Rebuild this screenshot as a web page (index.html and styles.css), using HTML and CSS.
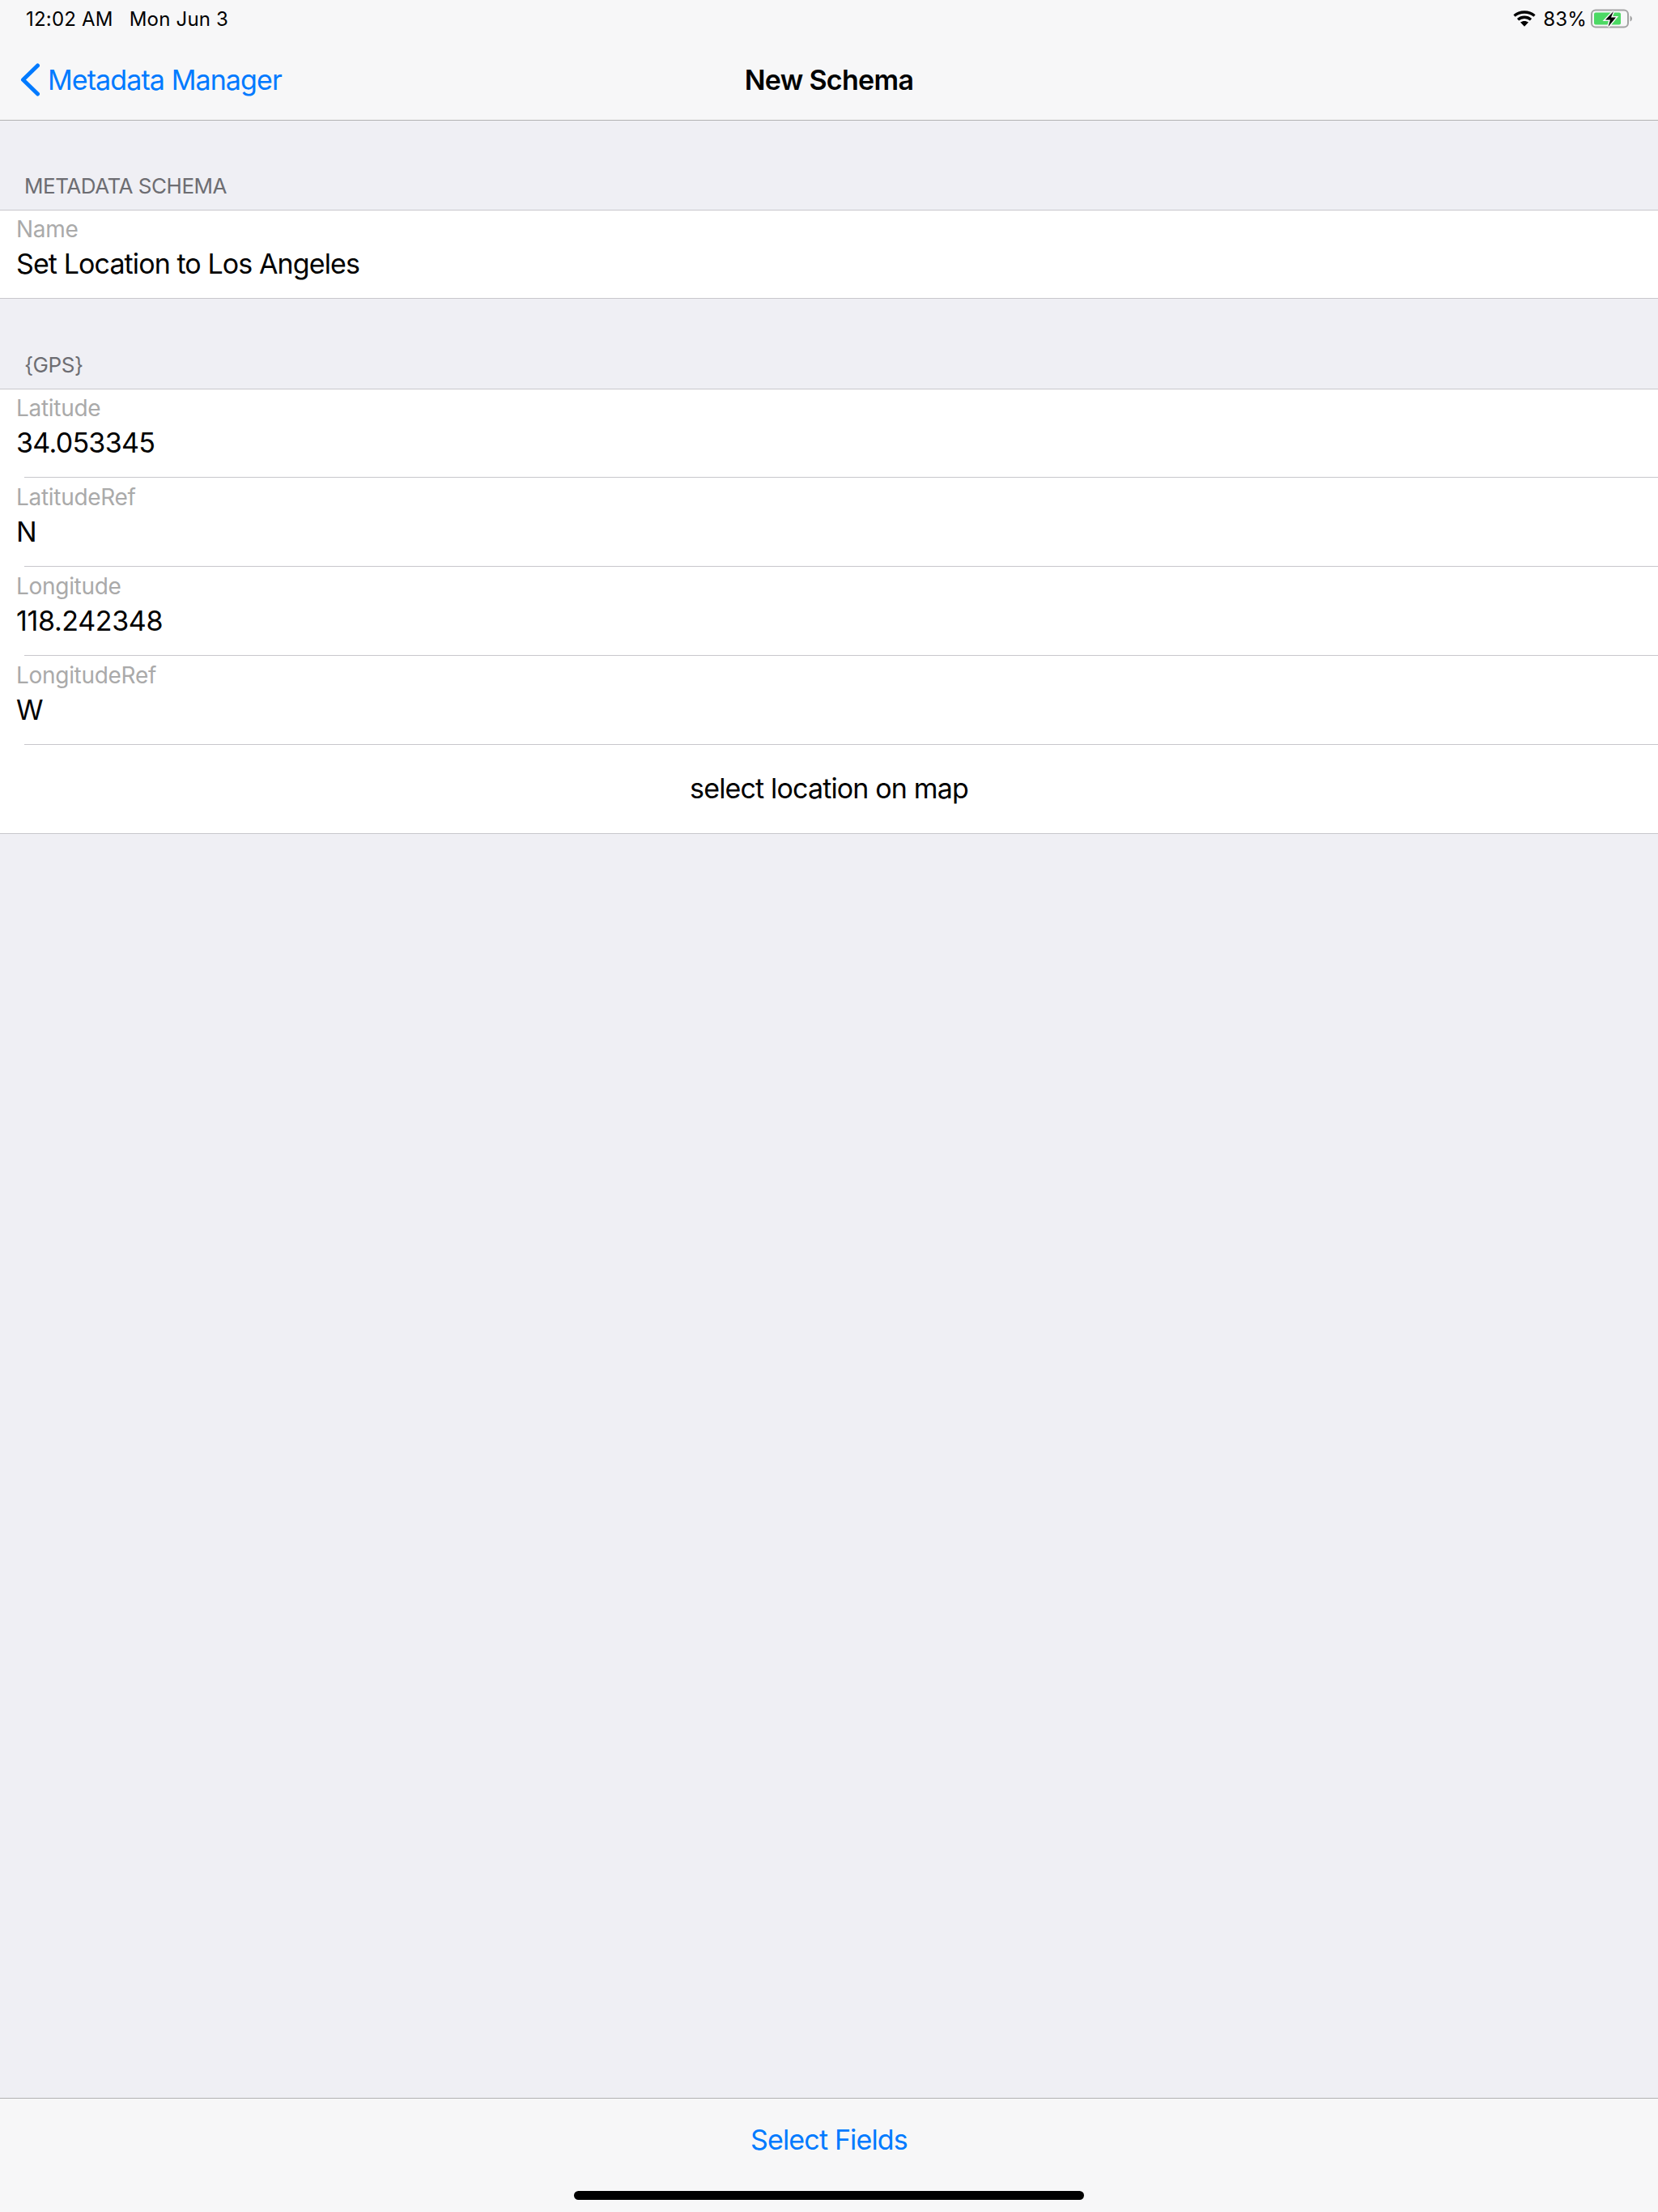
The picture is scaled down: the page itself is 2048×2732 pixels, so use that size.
FILE: index.html
```html
<!DOCTYPE html>
<html lang="en">
  <head>
    <meta charset="UTF-8" />
    <title>New Schema</title>
    <link rel="stylesheet" href="styles.css">
  </head>
  <body>
    <header class="top-bar">
      <div class="status-bar">
        <span class="status-time">12:02 AM</span>
        <span class="status-date">Mon Jun 3</span>
        <span class="status-right">
          <svg class="wifi-icon" width="28" height="20" viewBox="0 0 28 20">
            <path d="M1.500 6.500C8.500.4 19.500.4 26.500 6.500" fill="none" stroke="#000" stroke-width="3.400" />
            <path d="M6 11.200C10.500 7.300 17.500 7.300 22 11.200" fill="none" stroke="#000" stroke-width="3.400" />
            <path d="M14 19.800 9 14.600C11.800 12.300 16.200 12.300 19 14.600z" />
          </svg>
          <span class="status-pct">83%</span>
          <svg class="battery-icon" width="52" height="24" viewBox="0 0 52 24">
            <rect x="1" y="1.500" width="45" height="21" rx="5" fill="none" stroke="#a3a3a3" stroke-width="2" />
            <rect x="4" y="4.500" width="33" height="15" rx="2" fill="#4cd964" />
            <path d="M48.500 8.500c1.500.5 2.500 2 2.500 3.500s-1 3-2.500 3.500z" fill="#a3a3a3" />
            <path d="M28 3 18 13.500h6L21.500 22 31 10.500h-6z" fill="#000" stroke="#f7f7f8" stroke-width="3" paint-order="stroke" />
          </svg>
        </span>
      </div>
      <nav class="nav-bar">
        <a class="back-link">
          <svg class="back-chevron" width="24" height="41" viewBox="0 0 24 41">
            <path d="M21.500 3 3.500 20.500 21.500 38" fill="none" stroke="#007aff" stroke-width="5" stroke-linecap="round" stroke-linejoin="round" />
          </svg>
          <span>Metadata Manager</span>
        </a>
        <h1 class="nav-title">New Schema</h1>
      </nav>
    </header>

    <main class="content">
      <h2 class="section-title">METADATA SCHEMA</h2>
      <div class="group">
        <div class="field">
          <label>Name</label>
          <div class="value">Set Location to Los Angeles</div>
        </div>
      </div>

      <h2 class="section-title">{GPS}</h2>
      <div class="group">
        <div class="field">
          <label>Latitude</label>
          <div class="value num">34.053345</div>
        </div>
        <div class="field">
          <label>LatitudeRef</label>
          <div class="value">N</div>
        </div>
        <div class="field">
          <label>Longitude</label>
          <div class="value num-wide">118.242348</div>
        </div>
        <div class="field">
          <label>LongitudeRef</label>
          <div class="value">W</div>
        </div>
        <div class="field map-row">select location on map</div>
      </div>
    </main>

    <footer class="toolbar">
      <a class="toolbar-btn">Select Fields</a>
      <div class="home-bar"></div>
    </footer>
  </body>
</html>
```

FILE: styles.css
```css
html,
body {
  height: 100%;
}

body {
  margin: 0;
  display: flex;
  flex-direction: column;
  font-family: Inter, "Liberation Sans", sans-serif;
  background-color: #efeff4;
  color: #000;
  overflow: hidden;
}

.top-bar {
  height: 149px;
  box-sizing: border-box;
  background: #f7f7f8;
  border-bottom: 1px solid #b2b2b2;
}

.status-bar {
  height: 40px;
  box-sizing: border-box;
  display: flex;
  align-items: center;
  padding: 6px 31px 0 32px;
  font-size: 24px;
  letter-spacing: 0.2px;
  gap: 20px;
}

.status-right {
  margin-left: auto;
  display: flex;
  align-items: center;
  gap: 5px;
}

.wifi-icon {
  margin-right: 4px;
}

.status-pct {
  letter-spacing: 0.2px;
}

.nav-bar {
  height: 108px;
  box-sizing: border-box;
  padding-top: 8px;
  display: grid;
  grid-template-columns: 1fr auto 1fr;
  align-items: center;
}

.back-link {
  display: flex;
  align-items: center;
  gap: 10px;
  padding-left: 25px;
  color: #007aff;
  font-size: 34px;
  letter-spacing: -0.9px;
}

.nav-title {
  margin: 0;
  font-size: 34px;
  font-weight: 600;
  letter-spacing: -0.7px;
}

.content {
  flex: 1;
}

.section-title {
  margin: 41px 0 0;
  height: 69px;
  padding: 0 30px 14px;
  box-sizing: border-box;
  display: flex;
  align-items: flex-end;
  font-size: 26px;
  font-weight: 400;
  letter-spacing: -0.47px;
  color: #6d6d72;
}

.group + .section-title {
  margin-top: 42px;
}

.group {
  background: #fff;
  border-top: 1px solid #c8c7cc;
  border-bottom: 1px solid #c8c7cc;
}

.field {
  height: 108px;
  box-sizing: border-box;
  padding: 4px 0 0 20px;
  position: relative;
}

.field + .field {
  height: 110px;
  padding-top: 6px;
}

.field + .field::before {
  content: "";
  position: absolute;
  left: 30px;
  right: 0;
  top: 0;
  height: 1px;
  background: #c8c7cc;
}

.field label {
  display: block;
  height: 38px;
  line-height: 38px;
  font-size: 28px;
  letter-spacing: -0.3px;
  color: #aaaaaa;
}

.value {
  line-height: 48px;
  font-size: 34px;
  letter-spacing: -0.9px;
}

.value.num {
  letter-spacing: -0.7px;
}

.value.num-wide {
  letter-spacing: -0.35px;
}

.field + .map-row {
  display: flex;
  align-items: center;
  justify-content: center;
  padding: 0 0 1px;
  font-size: 34px;
  letter-spacing: -0.85px;
}

.toolbar {
  height: 141px;
  box-sizing: border-box;
  background: #f7f7f8;
  border-top: 1px solid #b2b2b2;
  display: flex;
  flex-direction: column;
  align-items: center;
}

.toolbar-btn {
  margin-top: 29px;
  line-height: 44px;
  color: #007aff;
  font-size: 34px;
  letter-spacing: -0.85px;
}

.home-bar {
  width: 630px;
  height: 11px;
  margin-top: 41px;
  border-radius: 6px;
  background: #000;
}
```
